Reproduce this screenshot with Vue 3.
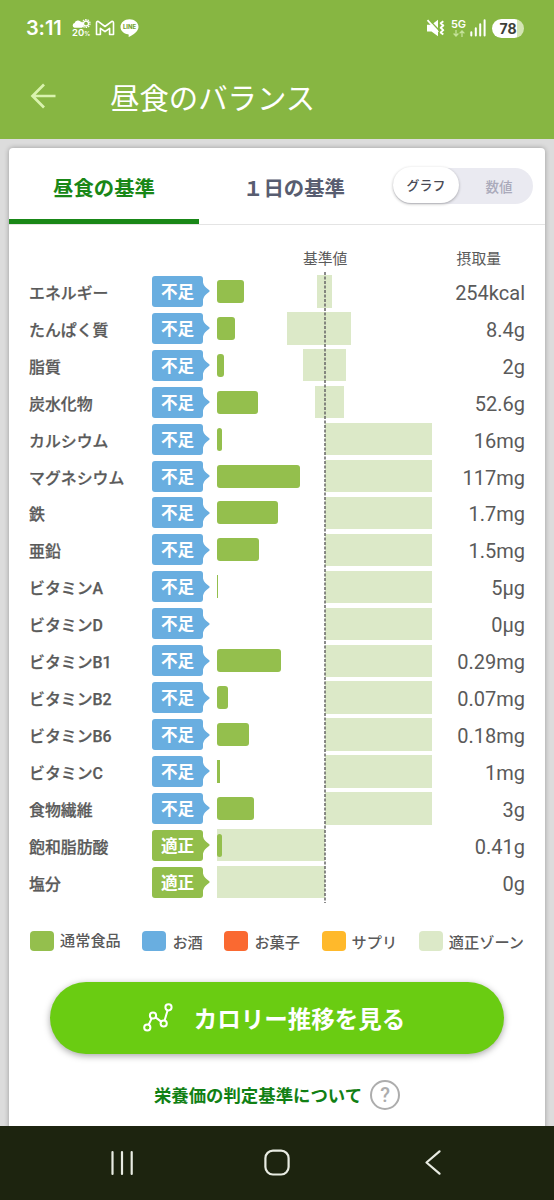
<template>
  <div class="screen">
    <!-- Status bar -->
    <div class="status-bar">
      <span class="clock">3:11</span>
      <div class="weather">
        <svg width="19" height="9" viewBox="0 0 19 9">
          <circle cx="14" cy="4.500" r="4" fill="none" stroke="#fff" stroke-width="1.200" stroke-dasharray="1.500 1" />
          <circle cx="14" cy="4.500" r="2.500" fill="none" stroke="#fff" stroke-width="1.300" />
          <path d="M2.600 8.800a2.400 2.400 0 0 1 0-4.700A3.700 3.700 0 0 1 9.200 3a3 3 0 0 1 .600 5.800z" fill="#fff" />
        </svg>
        <span class="rain">20<small>%</small></span>
      </div>
      <svg class="gmail" width="20" height="16" viewBox="0 0 20 16">
        <path d="M1.500 3Q1.500 .800 3.500 1.600L10 6.500l6.500-4.900Q18.500 .800 18.500 3V14.500H14.600V8.300L10 11.700 5.400 8.300v6.200H1.500z" fill="none" stroke="#fff" stroke-width="1.600" stroke-linejoin="round" />
      </svg>
      <svg class="line-app" width="19" height="18" viewBox="0 0 19 18">
        <path d="M9.500.3C4.500.3.500 3.700.500 7.900c0 3.700 3.200 6.800 7.500 7.400.9.200.8.700.6 2.200 0 .4.300.5.700.300 3.900-2.100 9.200-5.800 9.200-9.900C18.500 3.700 14.500.3 9.500.3z" fill="#fff" />
        <text x="9.500" y="10.300" text-anchor="middle" textLength="13" lengthAdjust="spacingAndGlyphs">LINE</text>
      </svg>
      <div class="status-right">
        <svg class="mute" width="19" height="18" viewBox="0 0 19 18">
          <path d="M1 5.800h4.500L12 .800v16.400L5.500 12.500H1z" fill="#fff" />
          <path d="M3 .800L13 11.300" stroke="#87b642" stroke-width="1.500" />
          <path d="M1.500 1.200L12.200 13" stroke="#fff" stroke-width="1.800" />
          <path d="M17.300 2.200l-2.600 2 2.600 2.300-2.600 2.300 2.600 2.300-2.600 2.300 2.600 2.200" fill="none" stroke="#fff" stroke-width="1.900" stroke-linejoin="round" />
        </svg>
        <div class="network">
          <span>5G</span>
          <svg width="12" height="7" viewBox="0 0 12 7">
            <path d="M3 0v5.800M.6 3.500L3 6l2.400-2.500M9 7V1M6.600 3.400L9 .900l2.400 2.500" fill="none" stroke="#c5e29a" stroke-width="1.300" />
          </svg>
        </div>
        <svg class="signal" width="16" height="18" viewBox="0 0 16 18">
          <path d="M1.300 16.500v-3.200M5.800 16.500V9.300M10.200 16.500V5.300M14.600 16.500V1.300" stroke="#fff" stroke-width="2" stroke-linecap="round" />
        </svg>
        <div class="battery">78</div>
      </div>
    </div>

    <!-- App bar -->
    <header class="app-bar">
      <svg width="26" height="26" viewBox="0 0 26 26">
        <path d="M25.500 13H2.500M14 1.500L2.500 13 14 24.500" fill="none" stroke="#d9f3ae" stroke-width="2.700" />
      </svg>
      <h1>昼食のバランス</h1>
    </header>

    <main class="content">
      <section class="card">
        <div class="tabs">
          <button class="tab active">昼食の基準</button>
          <button class="tab">１日の基準</button>
          <div class="toggle">
            <span class="toggle-on">グラフ</span>
            <span class="toggle-off">数値</span>
          </div>
        </div>

        <div class="chart-head">
          <span class="head-standard">基準値</span>
          <span class="head-intake">摂取量</span>
        </div>

        <div class="chart">
          <div v-for="item in nutrients" :key="item.name" class="nutrient">
            <span class="name">{{ item.name }}</span>
            <div class="badge" :class="{ ok: item.ok }">
              <span>{{ item.ok ? '適正' : '不足' }}</span>
              <svg width="7" height="22" viewBox="0 0 7 22">
                <path d="M0 2.500C1 6 2 6.500 3.500 8L6.300 10.200Q7 11 6.300 11.800L3.500 14C2 15.500 1 16 0 19.500z" fill="currentColor" />
              </svg>
            </div>
            <div class="plot">
              <div class="zone" :style="{ marginLeft: item.zone[0] + 'px', width: item.zone[1] - item.zone[0] + 'px' }"></div>
              <div class="bar" :class="{ thin: item.bar < 4 }" :style="{ width: item.bar + 'px' }"></div>
            </div>
            <span class="value">{{ item.value }}</span>
          </div>
          <svg class="standard-line" width="2" height="631">
            <path d="M1 0V631" stroke="#666" stroke-width="1.500" stroke-dasharray="3 1.500" />
          </svg>
        </div>

        <div class="legend">
          <div v-for="entry in legend" :key="entry.label" class="legend-item">
            <i class="swatch" :class="entry.type"></i>
            <span>{{ entry.label }}</span>
          </div>
        </div>

        <button class="trend-button">
          <svg width="30" height="29" viewBox="0 0 30 29" fill="none" stroke="#fff" stroke-width="2">
            <circle cx="4.300" cy="24.500" r="3.100" />
            <circle cx="10" cy="12.500" r="3.100" />
            <circle cx="20.700" cy="20.500" r="3.100" />
            <circle cx="25.500" cy="4.300" r="3.100" />
            <path d="M5.700 21.600l3-6.200M12.500 14.400l5.700 4.200M21.600 17.500l3-10.200" />
          </svg>
          <span>カロリー推移を見る</span>
        </button>

        <div class="criteria">
          <a>栄養価の判定基準について</a>
          <span class="help">?</span>
        </div>
      </section>
    </main>

    <!-- Android navigation -->
    <nav class="nav-bar">
      <svg width="24" height="26" viewBox="0 0 24 26">
        <path d="M2.500 2v22M12 2v22M21.700 2v22" stroke="#e8ebe2" stroke-width="2.200" stroke-linecap="round" />
      </svg>
      <svg width="26" height="28" viewBox="0 0 26 28">
        <rect x="1.400" y="1.700" width="23.200" height="23.800" rx="7.500" fill="none" stroke="#e8ebe2" stroke-width="2.200" />
      </svg>
      <svg width="16" height="26" viewBox="0 0 16 26">
        <path d="M14.500 1.300L1.500 12.500l13 11.200" fill="none" stroke="#e8ebe2" stroke-width="2.200" stroke-linecap="round" stroke-linejoin="round" />
      </svg>
    </nav>
  </div>
</template>

<script setup>
// zone: start and end of the recommended range on the 215px scale
const nutrients = [
  { name: 'エネルギー', bar: 26.7, zone: [100, 115], value: '254kcal' },
  { name: 'たんぱく質', bar: 18, zone: [70, 134], value: '8.4g' },
  { name: '脂質', bar: 7, zone: [86, 129], value: '2g' },
  { name: '炭水化物', bar: 40.5, zone: [98, 127], value: '52.6g' },
  { name: 'カルシウム', bar: 5, zone: [108, 215], value: '16mg' },
  { name: 'マグネシウム', bar: 82.5, zone: [108, 215], value: '117mg' },
  { name: '鉄', bar: 61, zone: [108, 215], value: '1.7mg' },
  { name: '亜鉛', bar: 41.5, zone: [108, 215], value: '1.5mg' },
  { name: 'ビタミンA', bar: 1, zone: [108, 215], value: '5μg' },
  { name: 'ビタミンD', bar: 0, zone: [108, 215], value: '0μg' },
  { name: 'ビタミンB1', bar: 64, zone: [108, 215], value: '0.29mg' },
  { name: 'ビタミンB2', bar: 11, zone: [108, 215], value: '0.07mg' },
  { name: 'ビタミンB6', bar: 32, zone: [108, 215], value: '0.18mg' },
  { name: 'ビタミンC', bar: 3, zone: [108, 215], value: '1mg' },
  { name: '食物繊維', bar: 36.5, zone: [108, 215], value: '3g' },
  { name: '飽和脂肪酸', bar: 5, zone: [0, 108], value: '0.41g', ok: true },
  { name: '塩分', bar: 0, zone: [0, 108], value: '0g', ok: true }
];

const legend = [
  { label: '通常食品', type: 'food' },
  { label: 'お酒', type: 'alcohol' },
  { label: 'お菓子', type: 'sweets' },
  { label: 'サプリ', type: 'supplement' },
  { label: '適正ゾーン', type: 'proper' }
];
</script>

<style>
body {
  margin: 0;
  background: #dcdcdc;
}
</style>

<style scoped>
.screen {
  display: flex;
  flex-direction: column;
  width: 554px;
  height: 1200px;
  overflow: hidden;
  background: #dcdcdc;
  font-family: "Noto Sans CJK JP", sans-serif;
  color: #5a5a5a;
}

.screen * {
  box-sizing: border-box;
}

svg {
  display: block;
  flex-shrink: 0;
}

button {
  border: 0;
  padding: 0;
  background: none;
  font-family: inherit;
}

.status-bar {
  display: flex;
  align-items: center;
  height: 56px;
  flex-shrink: 0;
  padding: 0 30px 0 26px;
  background: #87b642;
  color: #fff;
  font-family: Inter, sans-serif;
}

.clock {
  width: 46px;
  font-size: 20px;
  font-weight: 600;
  letter-spacing: -0.1px;
}

.weather {
  width: 19px;
  padding-top: 2px;
}

.rain {
  display: block;
  font-size: 9.5px;
  font-weight: 600;
  line-height: 10px;
  white-space: nowrap;
}

.rain small {
  font-size: 6px;
}

.gmail {
  margin-left: 4px;
}

.line-app {
  margin-left: 5px;
}

.line-app text {
  fill: #77a536;
  font-size: 5.6px;
  font-weight: 800;
}

.status-right {
  display: flex;
  align-items: center;
  margin-left: auto;
}

.network {
  display: flex;
  flex-direction: column;
  align-items: center;
  gap: 1px;
  width: 15px;
  margin: 0 4px 0 6px;
  font-size: 11px;
  font-weight: 600;
  line-height: 9px;
}

.battery {
  width: 32px;
  height: 19px;
  margin-left: 6px;
  border-radius: 10px;
  background: linear-gradient(90deg, #fff 78%, #d4e5b4 78%);
  color: #3d4039;
  font-size: 14px;
  font-weight: 700;
  line-height: 19px;
  text-align: center;
}

.app-bar {
  display: flex;
  align-items: center;
  height: 83px;
  flex-shrink: 0;
  padding: 0 0 3px 30px;
  background: #87b642;
}

.app-bar h1 {
  margin: 0 0 0 54px;
  color: #fff;
  font-size: 29.4px;
  font-weight: 400;
  line-height: 40px;
}

.content {
  height: 987px;
  flex-shrink: 0;
  padding: 9px 9px 0;
  overflow: hidden;
}

.card {
  height: 990px;
  border-radius: 4px;
  background: #fff;
  box-shadow: 0 0 5px rgba(0, 0, 0, 0.3);
}

.tabs {
  display: flex;
  height: 77px;
  border-bottom: 1px solid #e4e4e4;
}

.tab {
  width: 190px;
  height: 76px;
  padding-top: 6px;
  border-bottom: 5px solid transparent;
  color: #585d70;
  font-size: 20.4px;
  font-weight: 700;
}

.tab.active {
  border-color: #198717;
  color: #198717;
}

.toggle {
  display: flex;
  align-items: center;
  width: 140px;
  height: 36px;
  margin: 20px 0 0 4px;
  border-radius: 18px;
  background: #eaeaf1;
}

.toggle-on {
  width: 66px;
  height: 36px;
  margin-top: -2px;
  border-radius: 18px;
  background: #fff;
  box-shadow: 0 1px 3px rgba(0, 0, 0, 0.3);
  color: #4a4a55;
  font-size: 13px;
  font-weight: 500;
  line-height: 36px;
  text-align: center;
}

.toggle-off {
  flex: 1;
  padding-left: 6px;
  color: #aaaabb;
  font-size: 13.5px;
  font-weight: 500;
  text-align: center;
}

.chart-head {
  display: flex;
  height: 48px;
  padding: 22px 44px 0 294px;
  font-size: 14.8px;
  line-height: 22px;
}

.head-intake {
  margin-left: auto;
}

.chart {
  position: relative;
}

.nutrient {
  display: grid;
  grid-template-columns: 123px 65px 215px 1fr;
  align-items: center;
  height: 36.93px;
  padding: 0 20px;
}

.name {
  padding-top: 5px;
  font-family: Roboto, "Noto Sans CJK JP", sans-serif;
  font-size: 15.9px;
  font-weight: 500;
  line-height: 24px;
  white-space: nowrap;
  -webkit-text-stroke: 0.25px #5a5a5a;
}

.badge {
  display: flex;
  align-items: center;
  color: #69aee0;
}

.badge.ok {
  color: #92be4b;
}

.badge span {
  width: 51px;
  height: 31px;
  border-radius: 3px;
  background: currentColor;
  font-size: 16.6px;
  font-weight: 700;
  line-height: 31px;
  text-align: center;
  -webkit-text-fill-color: #fff;
}

.plot {
  display: grid;
  align-items: center;
}

.zone,
.bar {
  grid-area: 1 / 1;
}

.zone {
  height: 32.3px;
  background: #dce9c8;
}

.bar {
  height: 23px;
  border-radius: 3px;
  background: #94bf4d;
}

.bar.thin {
  border-radius: 0;
}

.value {
  padding-top: 3px;
  font-family: Roboto, sans-serif;
  font-size: 20px;
  line-height: 24px;
  text-align: right;
}

.standard-line {
  position: absolute;
  top: -1px;
  left: 315px;
}

.legend {
  display: flex;
  justify-content: space-between;
  padding: 26px 21px 0;
  font-size: 15.2px;
  font-weight: 500;
}

.legend-item {
  display: flex;
  align-items: center;
  gap: 6px;
  height: 28px;
}

.swatch {
  width: 24px;
  height: 20px;
  border-radius: 4px;
}

.food {
  background: #94bf4d;
}

/* the first label sits a little higher than the rest */
.food + span {
  margin-top: -3px;
}

.alcohol {
  background: #69aee0;
}

.sweets {
  background: #fa6931;
}

.supplement {
  background: #ffb92b;
}

.proper {
  background: #dce9c8;
}

.trend-button {
  display: flex;
  align-items: center;
  justify-content: center;
  gap: 21px;
  width: 454px;
  height: 72px;
  margin: 27px 0 0 41px;
  padding-right: 6px;
  border-radius: 36px;
  background: #6acc12;
  box-shadow: 0 2px 7px rgba(0, 0, 0, 0.35);
  color: #fff;
  font-size: 23.5px;
  font-weight: 700;
}

.criteria {
  display: flex;
  align-items: center;
  justify-content: center;
  gap: 8px;
  margin-top: 26px;
  color: #118014;
  font-size: 17.4px;
  font-weight: 700;
}

.help {
  width: 30px;
  height: 30px;
  border: 2px solid #adadad;
  border-radius: 50%;
  color: #adadad;
  font-family: Roboto, sans-serif;
  font-size: 20px;
  font-weight: 500;
  line-height: 26px;
  text-align: center;
}

.nav-bar {
  display: grid;
  grid-template-columns: 154px 161px 16px;
  align-items: center;
  height: 74px;
  flex-shrink: 0;
  padding-left: 110px;
  background: #1d240f;
}
</style>
